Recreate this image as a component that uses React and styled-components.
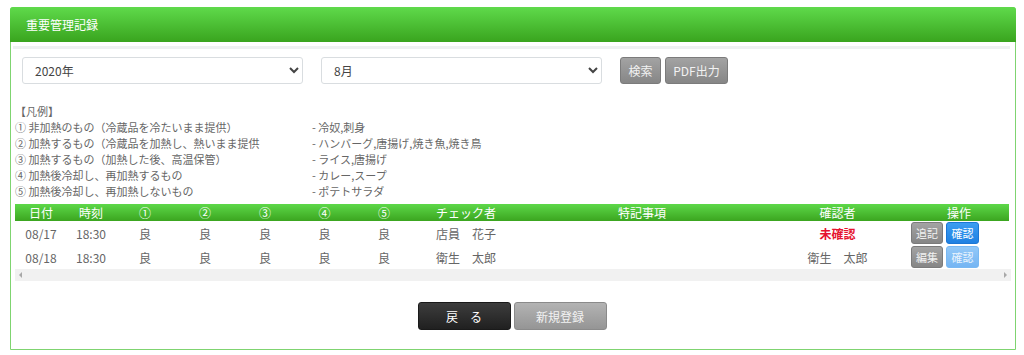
import React from 'react';
import styled, { createGlobalStyle, css } from 'styled-components';

const GlobalStyle = createGlobalStyle`
    body {
        margin: 0;
        background: #fff;
        font-family: "Noto Sans CJK JP", "Noto Sans", "Liberation Sans", sans-serif;
        color: #555;
    }
`;

const legend = [
    ['① 非加熱のもの（冷蔵品を冷たいまま提供）', '- 冷奴,刺身'],
    ['② 加熱するもの（冷蔵品を加熱し、熱いまま提供', '- ハンバーグ,唐揚げ,焼き魚,焼き鳥'],
    ['③ 加熱するもの（加熱した後、高温保管）', '- ライス,唐揚げ'],
    ['④ 加熱後冷却し、再加熱するもの', '- カレー,スープ'],
    ['⑤ 加熱後冷却し、再加熱しないもの', '- ポテトサラダ'],
];

const columns = [
    ['日付', 52], ['時刻', 48], ['①', 60], ['②', 60], ['③', 60], ['④', 59], ['⑤', 60],
    ['チェック者', 104], ['特記事項', 248], ['確認者', 143], ['操作', 100],
];

const rows = [
    { date: '08/17', time: '18:30', checker: '店員　花子', confirmed: null, edit: '追記', done: false },
    { date: '08/18', time: '18:30', checker: '衛生　太郎', confirmed: '衛生　太郎', edit: '編集', done: true },
];

const App = () => {
    return (
        <Page>
            <GlobalStyle />
            <Panel>
                <Header>重要管理記録</Header>
                <Body>
                    <Divider />
                    <Filters>
                        <Select defaultValue="2020"><option value="2020">2020年</option></Select>
                        <Select defaultValue="8"><option value="8">8月</option></Select>
                        <Buttons>
                            <GrayButton $w={41}>検索</GrayButton>
                            <GrayButton $w={63}>PDF出力</GrayButton>
                        </Buttons>
                    </Filters>

                    <Legend>
                        <LegendTitle>【凡例】</LegendTitle>
                        {legend.map(([a, b]) => (
                            <React.Fragment key={a}>
                                <span>{a}</span>
                                <span>{b}</span>
                            </React.Fragment>
                        ))}
                    </Legend>

                    <TableWrap>
                        <Table>
                            <colgroup>
                                {columns.map(([name, w]) => <col key={name} style={{ width: w }} />)}
                            </colgroup>
                            <thead>
                                <tr>{columns.map(([name]) => <Th key={name}>{name}</Th>)}</tr>
                            </thead>
                            <tbody>
                                {rows.map((r) => (
                                    <tr key={r.date}>
                                        <Td>{r.date}</Td>
                                        <Td>{r.time}</Td>
                                        <Td>良</Td>
                                        <Td>良</Td>
                                        <Td>良</Td>
                                        <Td>良</Td>
                                        <Td>良</Td>
                                        <Td>{r.checker}</Td>
                                        <Td></Td>
                                        <Td>{r.confirmed ? r.confirmed : <Unconfirmed>未確認</Unconfirmed>}</Td>
                                        <ActionCell>
                                            <SmallButton>{r.edit}</SmallButton>
                                            <SmallButton $blue $faded={r.done}>確認</SmallButton>
                                        </ActionCell>
                                    </tr>
                                ))}
                            </tbody>
                        </Table>
                        <Scrollbar>
                            <Arrow $left />
                            <Arrow />
                        </Scrollbar>
                    </TableWrap>

                    <Footer>
                        <BigButton $dark>戻　る</BigButton>
                        <BigButton>新規登録</BigButton>
                    </Footer>
                </Body>
            </Panel>
        </Page>
    );
};

const Page = styled.div`
    padding: 7px 8px 0 10px;
`;

const Panel = styled.div`
    height: 343px;
    box-sizing: border-box;
    border: 1px solid #7fd470;
    border-radius: 3px 3px 0 0;
    background: #fff;
`;

const Header = styled.div`
    height: 35px;
    margin: -1px -1px 0;
    padding-left: 16px;
    display: flex;
    align-items: center;
    border-radius: 3px 3px 0 0;
    background: linear-gradient(#5fda4b, #39a41e);
    color: #fff;
    font-size: 12px;
`;

const Body = styled.div`
    padding: 4px 5px 0 1px;
`;

const Divider = styled.div`
    height: 3px;
    margin-left: 1px;
    background: #eef1f1;
`;

const Filters = styled.div`
    display: flex;
    align-items: center;
    gap: 18px;
    margin-top: 8px;
    padding-left: 10px;
`;

const Select = styled.select`
    width: 281px;
    height: 27px;
    box-sizing: border-box;
    padding: 0 8px;
    border: 1px solid #d9dde0;
    border-radius: 3px;
    background: #fff;
    color: #444;
    font-family: inherit;
    font-size: 12px;
`;

const Buttons = styled.div`
    display: flex;
    gap: 4px;
`;

const GrayButton = styled.button`
    width: ${(p) => p.$w}px;
    height: 27px;
    padding: 0;
    border: 1px solid #7b7b7b;
    border-radius: 3px;
    background: linear-gradient(#a3a3a3, #868686);
    color: #f2f2f2;
    font-family: inherit;
    font-size: 12px;
`;

const Legend = styled.div`
    display: grid;
    grid-template-columns: 297px 1fr;
    margin-top: 19px;
    padding-left: 3px;
    font-size: 11px;
    line-height: 16px;
    color: #666;
`;

const LegendTitle = styled.span`
    grid-column: 1 / 3;
`;

const TableWrap = styled.div`
    margin-top: 5px;
    padding-left: 3px;
`;

const Table = styled.table`
    width: 994px;
    table-layout: fixed;
    border-collapse: collapse;
    font-size: 12px;
`;

const Th = styled.th`
    height: 17px;
    padding: 0;
    background: linear-gradient(#5dd849, #3ba51f);
    color: #fff;
    font-weight: normal;
    line-height: 17px;
    text-align: center;
`;

const Td = styled.td`
    height: 24px;
    padding: 0;
    color: #666;
    text-align: center;
`;

const ActionCell = styled.td`
    padding: 0 0 0 2px;
    white-space: nowrap;
`;

const Unconfirmed = styled.span`
    color: #e5132f;
    font-weight: bold;
`;

const SmallButton = styled.button`
    width: ${(p) => (p.$blue ? 33 : 32)}px;
    height: 22px;
    margin-right: 3px;
    padding: 0;
    vertical-align: middle;
    border-radius: 3px;
    font-family: inherit;
    font-size: 11px;
    color: #f2f2f2;
    border: 1px solid #7b7b7b;
    background: linear-gradient(#a3a3a3, #868686);
    ${(p) => p.$blue && css`
        border-color: #1c76d4;
        background: linear-gradient(#3c9df1, #1f80e2);
        color: #fff;
    `}
    ${(p) => p.$faded && css`
        border-color: #79b8f2;
        background: linear-gradient(#92c8f8, #74b5f3);
        color: #e8f3fd;
    `}
`;

const Scrollbar = styled.div`
    width: 996px;
    height: 12px;
    display: flex;
    justify-content: space-between;
    align-items: center;
    padding: 0 4px;
    box-sizing: border-box;
    background: #f1f1f1;
`;

const Arrow = styled.span`
    width: 0;
    height: 0;
    border-top: 3px solid transparent;
    border-bottom: 3px solid transparent;
    ${(p) => (p.$left ? 'border-right: 3px solid #a8a8a8;' : 'border-left: 3px solid #a8a8a8;')}
`;

const Footer = styled.div`
    display: flex;
    justify-content: center;
    gap: 3px;
    margin-top: 21px;
    padding-left: 2px;
`;

const BigButton = styled.button`
    width: 93px;
    height: 28px;
    padding: 0;
    border-radius: 3px;
    font-family: inherit;
    font-size: 12px;
    color: #f2f2f2;
    border: 1px solid #8a8a8a;
    background: linear-gradient(#b3b3b3, #959595);
    ${(p) => p.$dark && css`
        border-color: #1a1a1a;
        background: linear-gradient(#3d3d3d, #202020);
        color: #fff;
    `}
`;

export default App;
